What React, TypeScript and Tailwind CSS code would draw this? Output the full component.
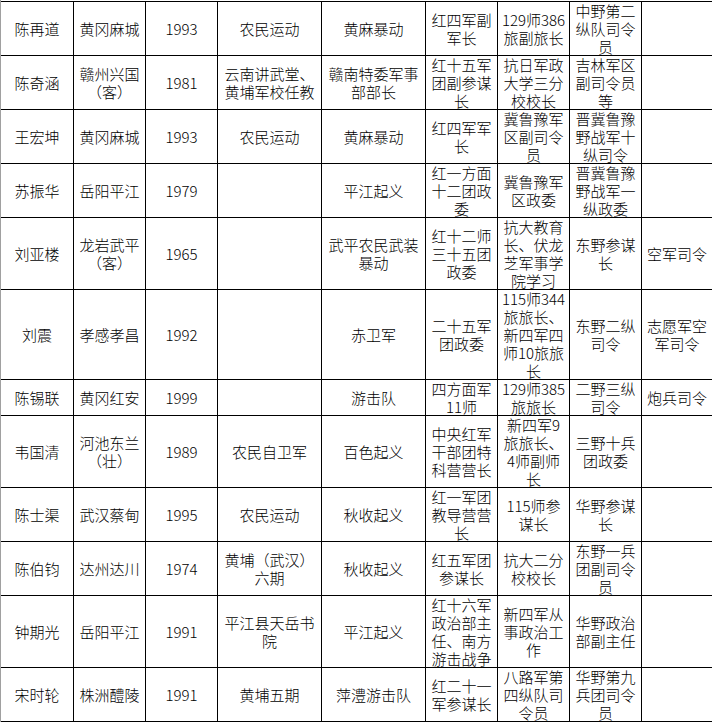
import React from "react";

const rows: string[][][] = [
  [["陈再道"], ["黄冈麻城"], ["1993"], ["农民运动"], ["黄麻暴动"], ["红四军副", "军长"], ["129师386", "旅副旅长"], ["中野第二", "纵队司令", "员"], []],
  [["陈奇涵"], ["赣州兴国", "（客）"], ["1981"], ["云南讲武堂、", "黄埔军校任教"], ["赣南特委军事", "部部长"], ["红十五军", "团副参谋", "长"], ["抗日军政", "大学三分", "校校长"], ["吉林军区", "副司令员", "等"], []],
  [["王宏坤"], ["黄冈麻城"], ["1993"], ["农民运动"], ["黄麻暴动"], ["红四军军", "长"], ["冀鲁豫军", "区副司令", "员"], ["晋冀鲁豫", "野战军十", "纵司令"], []],
  [["苏振华"], ["岳阳平江"], ["1979"], [], ["平江起义"], ["红一方面", "十二团政", "委"], ["冀鲁豫军", "区政委"], ["晋冀鲁豫", "野战军一", "纵政委"], []],
  [["刘亚楼"], ["龙岩武平", "（客）"], ["1965"], [], ["武平农民武装", "暴动"], ["红十二师", "三十五团", "政委"], ["抗大教育", "长、伏龙", "芝军事学", "院学习"], ["东野参谋", "长"], ["空军司令"]],
  [["刘震"], ["孝感孝昌"], ["1992"], [], ["赤卫军"], ["二十五军", "团政委"], ["115师344", "旅旅长、", "新四军四", "师10旅旅", "长"], ["东野二纵", "司令"], ["志愿军空", "军司令"]],
  [["陈锡联"], ["黄冈红安"], ["1999"], [], ["游击队"], ["四方面军", "11师"], ["129师385", "旅旅长"], ["二野三纵", "司令"], ["炮兵司令"]],
  [["韦国清"], ["河池东兰", "（壮）"], ["1989"], ["农民自卫军"], ["百色起义"], ["中央红军", "干部团特", "科营营长"], ["新四军9", "旅旅长、", "4师副师", "长"], ["三野十兵", "团政委"], []],
  [["陈士渠"], ["武汉蔡甸"], ["1995"], ["农民运动"], ["秋收起义"], ["红一军团", "教导营营", "长"], ["115师参", "谋长"], ["华野参谋", "长"], []],
  [["陈伯钧"], ["达州达川"], ["1974"], ["黄埔（武汉）", "六期"], ["秋收起义"], ["红五军团", "参谋长"], ["抗大二分", "校校长"], ["东野一兵", "团副司令", "员"], []],
  [["钟期光"], ["岳阳平江"], ["1991"], ["平江县天岳书", "院"], ["平江起义"], ["红十六军", "政治部主", "任、南方", "游击战争"], ["新四军从", "事政治工", "作"], ["华野政治", "部副主任"], []],
  [["宋时轮"], ["株洲醴陵"], ["1991"], ["黄埔五期"], ["萍澧游击队"], ["红二十一", "军参谋长"], ["八路军第", "四纵队司", "令员"], ["华野第九", "兵团司令", "员"], []],
];

export default function App() {
  return (
    <div
      className="w-[712px] h-[723px] bg-white overflow-hidden flex [text-spacing-trim:space-all]"
      style={{ fontFamily: '"Noto Sans CJK SC", "Noto Sans", sans-serif' }}
    >
      <div className="w-px h-[722px] bg-[#a0a0a0] shrink-0" />
      <div className="mt-px h-[721px] bg-black pt-px pb-px grid grid-cols-[72px_71px_71px_103px_103px_71px_71px_71px_70px] grid-rows-[53px_53px_53px_53px_71px_89px_35px_71px_53px_53px_71px_53px] gap-px self-start">
        {rows.map((row, ri) =>
          row.map((cell, ci) => (
            <div
              key={`${ri}-${ci}`}
              className="bg-white flex flex-col items-center justify-center text-center text-[15px] leading-[18px] font-light text-black"
            >
              {cell.map((line, li) => (
                <div key={li} className="whitespace-nowrap">
                  {line}
                </div>
              ))}
            </div>
          ))
        )}
      </div>
    </div>
  );
}
